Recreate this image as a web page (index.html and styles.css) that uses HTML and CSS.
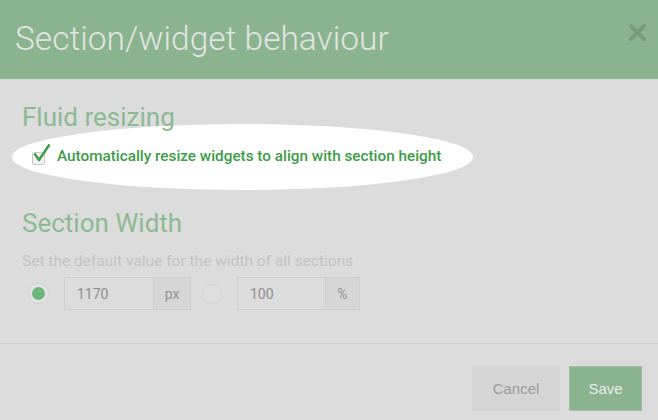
FILE: index.html
```html
<!DOCTYPE html>
<html lang="en">
<head>
    <meta charset="UTF-8">
    <meta name="viewport" content="width=device-width, initial-scale=1.0">
    <title>Section/widget behaviour</title>
    <link rel="stylesheet" href="styles.css">
</head>
<body>

    <div class="modal">
        <div class="modal-header">
            <h1>Section/widget behaviour</h1>
            <button class="close" aria-label="Close">
                <svg width="19" height="19" viewBox="0 0 19 19">
                    <path d="M3 3 L16 16 M16 3 L3 16" stroke="#789a7d" stroke-width="4" stroke-linecap="round"/>
                </svg>
            </button>
        </div>

        <div class="modal-body">
            <h2>Fluid resizing</h2>
            <label class="check-row">
                <span class="checkbox">
                    <svg class="tick" width="18" height="20" viewBox="0 0 18 20">
                        <path d="M1.5 10.5 L6 17 L16.5 1.5" fill="none" stroke="#3d9c48" stroke-width="2.4" stroke-linejoin="round"/>
                    </svg>
                </span>
                Automatically resize widgets to align with section height
            </label>

            <h2 class="section-width">Section Width</h2>
            <p class="help">Set the default value for the width of all sections</p>

            <div class="width-row">
                <span class="radio checked"></span>
                <div class="input-group px">
                    <span class="value">1170</span>
                    <span class="addon">px</span>
                </div>
                <span class="radio"></span>
                <div class="input-group pct">
                    <span class="value">100</span>
                    <span class="addon">%</span>
                </div>
            </div>
        </div>

        <div class="modal-footer">
            <button class="btn cancel">Cancel</button>
            <button class="btn save">Save</button>
        </div>
    </div>

</body>
</html>
```

FILE: styles.css
```css
body {
    margin: 0;
    background-color: #dcdcdc;
    font-family: Roboto, "Liberation Sans", sans-serif;
}
.modal {
    width: 658px;
    height: 420px;
    overflow: hidden;
}

/* Header */
.modal-header {
    height: 79px;
    background-color: #8ab48f;
    border-bottom: 1px solid #d4d8d4;
    display: flex;
    justify-content: space-between;
    padding: 0 11px 0 15px;
}
.modal-header h1 {
    margin: 19px 0 0;
    font-size: 33.5px;
    line-height: 40px;
    font-weight: 300;
    color: #e2e3e2;
}
.close {
    background: none;
    border: none;
    padding: 0;
    margin-top: 23px;
    width: 19px;
    height: 19px;
}

/* Body */
.modal-body {
    padding: 0 22px;
}
h2 {
    margin: 21px 0 0;
    font-size: 26px;
    line-height: 32px;
    font-weight: 400;
    color: #8cba91;
}
.check-row {
    position: relative;
    display: flex;
    align-items: center;
    margin-top: 13px;
    height: 20px;
    font-size: 15.3px;
    line-height: 20px;
    font-weight: 500;
    color: #3d9c48;
}
/* highlight ellipse behind the option */
.check-row::before {
    content: "";
    position: absolute;
    left: -10px;
    top: -22px;
    width: 461px;
    height: 66px;
    border-radius: 50%;
    background: #fff;
    z-index: -1;
}
.checkbox {
    position: relative;
    box-sizing: border-box;
    width: 13px;
    height: 13px;
    margin: 4px 12px 0 10px;
    border: 1px solid #c9c9c9;
    background: #f3f3f3;
    border-radius: 2px;
}
.tick {
    position: absolute;
    left: 0;
    top: -10px;
}
.section-width {
    margin-top: 41px;
}
.help {
    margin: 12px 0 0;
    font-size: 15.5px;
    line-height: 20px;
    color: #c3c3c3;
}

/* Width inputs */
.width-row {
    display: flex;
    align-items: center;
    margin-top: 6px;
    padding-left: 7px;
}
.radio {
    box-sizing: border-box;
    width: 20px;
    height: 20px;
    border-radius: 50%;
    border: 1px solid #d2d2d2;
    background: #dedede;
    margin-right: 15px;
}
.radio.checked {
    width: 19px;
    height: 19px;
    border: 3px solid #e3e3e3;
    background: #6db67a;
    box-shadow: 0 0 0 1px #d2d2d2;
    margin-right: 16px;
}
.input-group {
    display: flex;
    height: 33px;
    box-sizing: border-box;
    border: 1px solid #cecece;
    font-size: 14px;
    color: #8c8c8c;
}
.input-group .value {
    display: flex;
    align-items: center;
    padding-left: 12px;
    background: #dcdcdc;
}
.input-group .addon {
    display: flex;
    align-items: center;
    justify-content: center;
    border-left: 1px solid #cecece;
    background: #d6d6d6;
    color: #939393;
}
.input-group.px {
    margin-right: 11px;
}
.px .value { width: 76px; }
.px .addon { width: 36px; }
.pct .value { width: 75px; }
.pct .addon { width: 33px; }

/* Footer */
.modal-footer {
    margin-top: 33px;
    border-top: 1px solid #cdcdcd;
    display: flex;
    justify-content: flex-end;
    gap: 9px;
    padding: 22px 16px 0 0;
}
.btn {
    height: 45px;
    border: none;
    font-family: "Liberation Sans", Arial, sans-serif;
    font-size: 15px;
    cursor: pointer;
}
.cancel {
    width: 88px;
    background: #d5d5d5;
    color: #9b9b9b;
}
.save {
    width: 73px;
    background: #8ab48f;
    border: 1px solid #a1c3a5;
    color: #e9ece9;
}
```
